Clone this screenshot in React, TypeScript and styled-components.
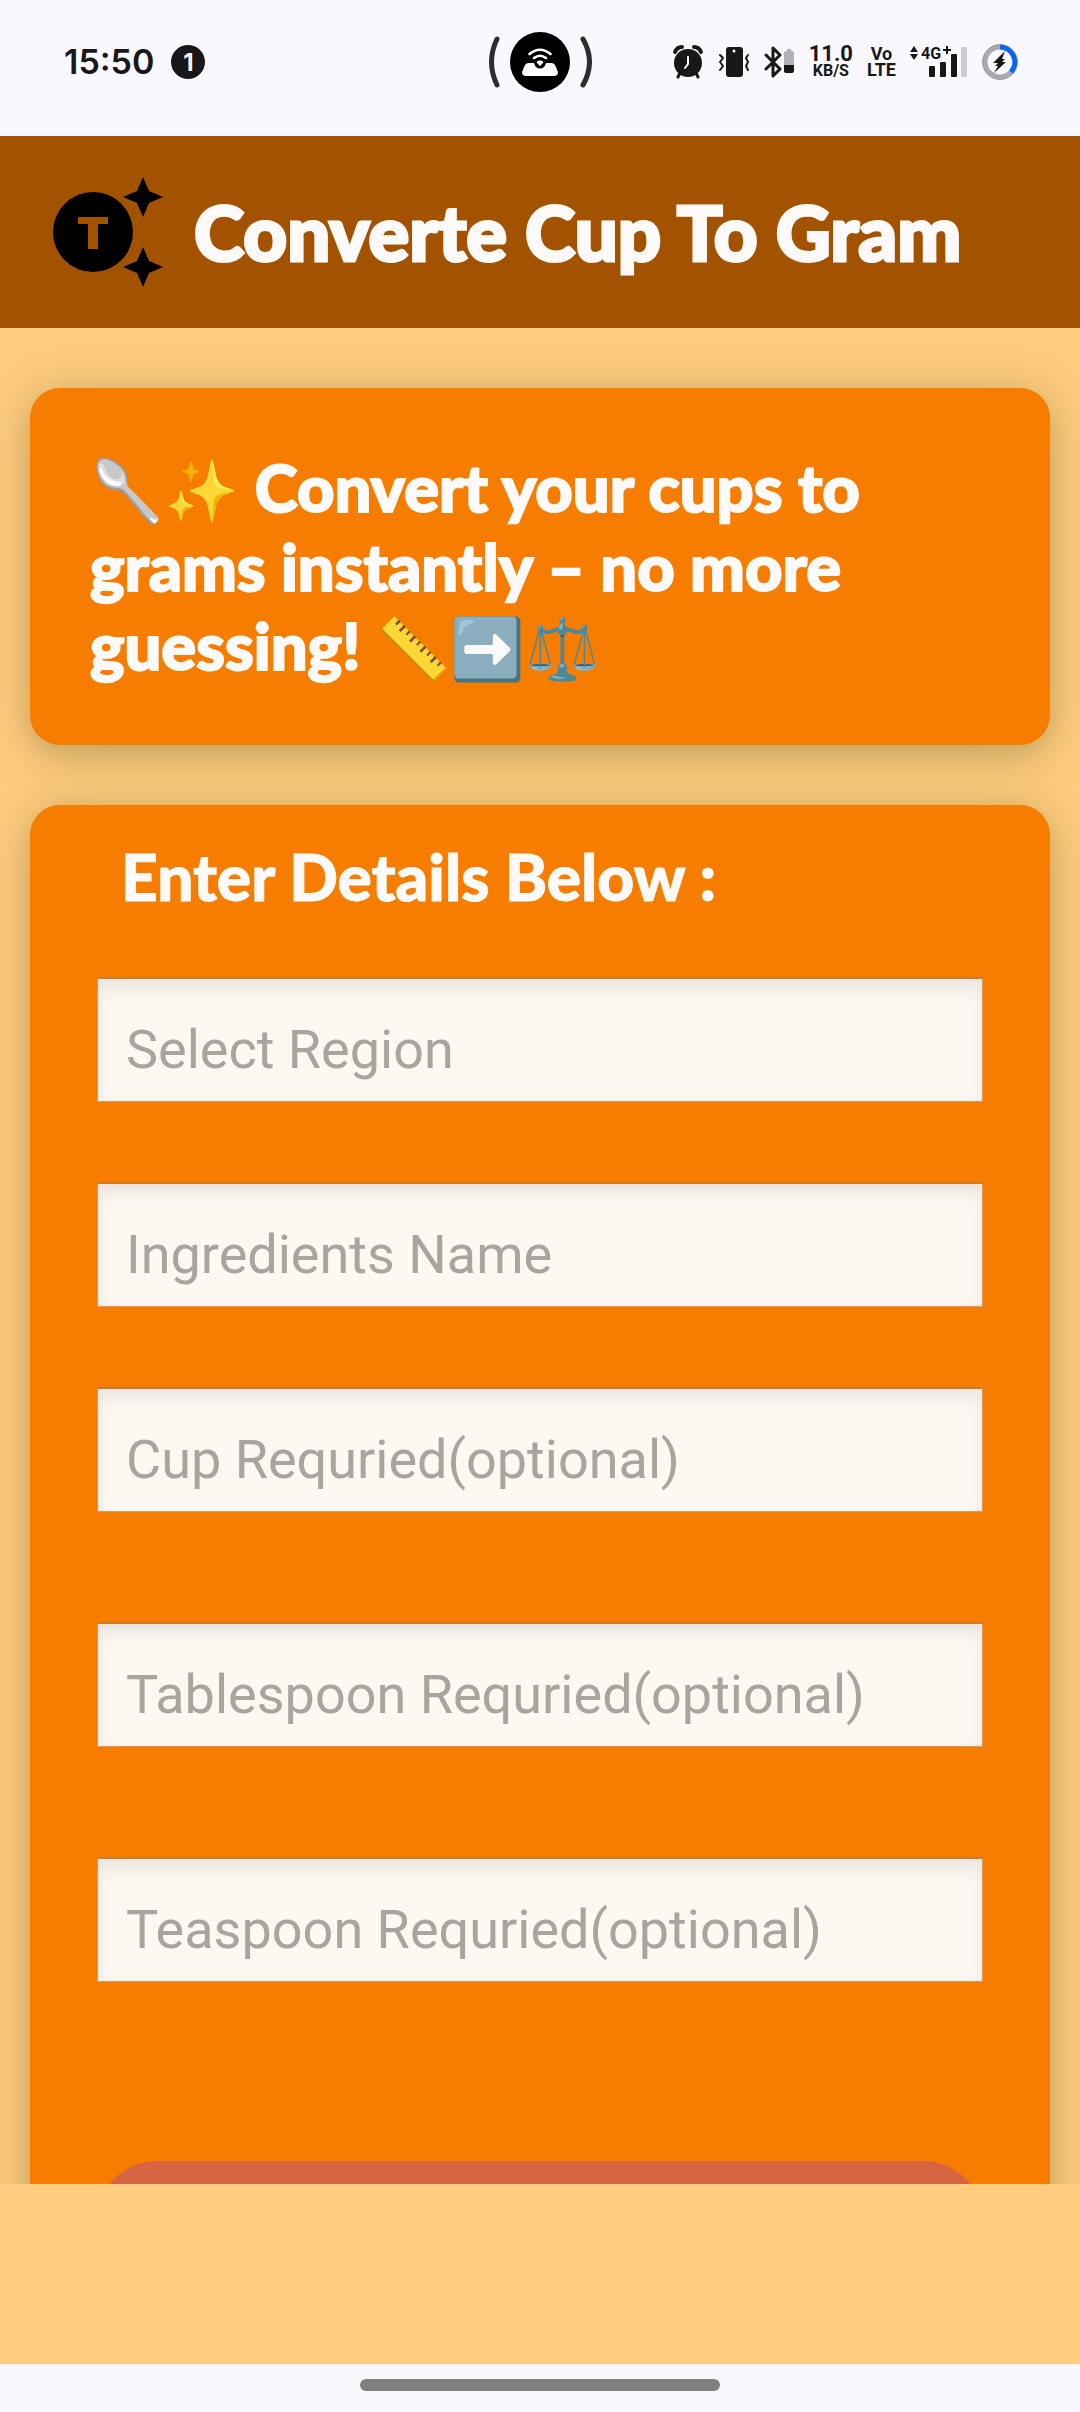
import React, { useState } from 'react';
import styled, { createGlobalStyle } from 'styled-components';

const display = "Lato, 'Noto Sans', 'Noto Color Emoji', sans-serif";
const system = 'Inter, Roboto, sans-serif';

const GlobalStyle = createGlobalStyle`
  *, *::before, *::after { box-sizing: border-box; }
  body { margin: 0; background: #ffcc80; }
`;

const Shell = styled.div`
  display: flex;
  flex-direction: column;
  height: 100vh;
  background: #ffcc80;
  font-family: ${display};
`;

const StatusBar = styled.div`
  display: grid;
  grid-template-columns: 1fr auto 1fr;
  align-items: center;
  flex: none;
  padding: 30px 62px 42px;
  background: #f9f8ff;
  color: #181818;
  font-family: ${system};
`;

const StatusSide = styled.div<{ $end?: boolean }>`
  display: flex;
  align-items: center;
  justify-content: ${(p) => (p.$end ? 'flex-end' : 'flex-start')};
  gap: ${(p) => (p.$end ? 14 : 17)}px;
`;

const Clock = styled.time`
  padding-left: 2px;
  font-size: 34px;
  line-height: 40px;
  font-weight: 600;
`;

const Badge = styled.span`
  display: grid;
  place-items: center;
  width: 34px;
  height: 34px;
  border-radius: 50%;
  background: #181818;
  color: #f9f8ff;
  font-size: 24px;
  font-weight: 700;
`;

const Stack = styled.span`
  display: flex;
  flex-direction: column;
  align-items: center;
  font-family: Roboto, sans-serif;
  font-weight: 700;
`;

const StackLine = styled.span<{ $size: number; $line: number }>`
  font-size: ${(p) => p.$size}px;
  line-height: ${(p) => p.$line}px;
`;

const AppBar = styled.header`
  display: flex;
  align-items: center;
  flex: none;
  gap: 30px;
  padding: 36px 50px;
  background: #a35200;
`;

const Title = styled.h1`
  margin: 0;
  color: #fcfaf8;
  font-size: 76px;
  line-height: 120px;
  font-weight: 900;
  white-space: nowrap;
  -webkit-text-stroke: 3px #fcfaf8;
`;

const Scroll = styled.main`
  display: flex;
  flex-direction: column;
  flex: 1;
  gap: 60px;
  min-height: 0;
  padding: 60px 30px 0;
  overflow: hidden;
`;

const Card = styled.section`
  flex: none;
  border-radius: 30px;
  background: #f77d00;
  box-shadow:
    0 10px 24px rgba(80, 80, 30, 0.15),
    0 6px 54px rgba(100, 100, 30, 0.3);
`;

const Intro = styled(Card)`
  padding: 60px;
`;

const IntroText = styled.p`
  margin: 0;
  color: #fcfaf8;
  font-size: 65px;
  line-height: 79px;
  font-weight: 900;
  -webkit-text-stroke: 2px #fcfaf8;
`;

const Emoji = styled.span`
  font-size: 60px;
  line-height: 60px;
  -webkit-text-stroke: 0;
`;

const Form = styled(Card).attrs({ as: 'form' })`
  padding: 32px 67px 80px;
`;

const FormTitle = styled.h2`
  margin: 0 0 60px;
  padding-left: 24px;
  color: #fcfaf8;
  font-size: 64px;
  line-height: 80px;
  font-weight: 900;
  -webkit-text-stroke: 1px #fcfaf8;
`;

const Fields = styled.div<{ $gap: number }>`
  display: flex;
  flex-direction: column;
  gap: ${(p) => p.$gap}px;
`;

const Field = styled.input`
  display: block;
  width: 100%;
  height: 125px;
  padding: 18px 28px 0;
  border: 1px solid #dc9a58;
  border-top: 2px solid #cd7a2a;
  border-radius: 0;
  outline: none;
  background: #fdf8f2;
  box-shadow: inset 0 8px 16px rgba(60, 50, 60, 0.1);
  color: #333333;
  font-family: Roboto, sans-serif;
  font-size: 54px;

  &::placeholder { color: #a8a49f; opacity: 1; }
`;

const Submit = styled.button`
  display: block;
  width: 100%;
  height: 150px;
  margin-top: 179px;
  border: 0;
  border-radius: 60px;
  background: #d86541;
  color: #fcfaf8;
  font-family: ${display};
  font-size: 64px;
  font-weight: 900;
`;

const AdSlot = styled.aside`
  flex: none;
  height: 180px;
`;

const NavBar = styled.footer`
  display: flex;
  justify-content: center;
  flex: none;
  padding: 15px 0 21px;
  background: #f9f8ff;
`;

const NavHandle = styled.span`
  width: 33.333%;
  height: 12px;
  border-radius: 6px;
  background: #7f7f7f;
`;

const star = (cx: number, cy: number) =>
  `M${cx} ${cy - 20}L${cx + 6} ${cy - 6}L${cx + 20} ${cy}L${cx + 6} ${cy + 6}L${cx} ${cy + 20}L${cx - 6} ${cy + 6}L${cx - 20} ${cy}L${cx - 6} ${cy - 6}Z`;

const Logo = () => (
  <svg width="114" height="114" viewBox="50 175 114 114" aria-hidden="true">
    <circle cx="93" cy="232" r="40" />
    <path fill="#a35200" d="M78 217h30v7H98v25H88v-25H78z" />
    <path d={star(143, 197)} />
    <path d={star(143, 267)} />
  </svg>
);

const CameraPill = () => (
  <svg width="104" height="64" viewBox="488 30 104 64" aria-hidden="true">
    <g fill="none" stroke="#2d2d2d" strokeWidth="5" strokeLinecap="round">
      <path d="M497 39Q486 62 497 85M583 39Q596 62 583 85" />
    </g>
    <circle cx="540" cy="62" r="30" />
    <path fill="#fff" d="M525 65q1-2 4-2h22q3 0 4 2l3 7q0 4-4 4h-28q-4 0-4-4z" />
    <path d="M534 62a6 6 0 0 0 12 0z" fill="#000" />
    <circle cx="540" cy="63" r="5.500" fill="#000" />
    <path d="M540 60.500q4 0 3 2.500l-3 3-3-3q-1-2.500 3-2.500z" fill="#fff" />
    <path d="M529.500 54q10.500-8.500 21 0M534 58q6-4.500 12 0" fill="none" stroke="#fff" strokeWidth="2.600" strokeLinecap="round" />
  </svg>
);

const Alarm = () => (
  <svg width="32" height="34" viewBox="0 0 32 34" aria-hidden="true">
    <circle cx="16" cy="18" r="14" fill="#181818" />
    <path d="M3 7q2-5 7-5M29 7q-2-5-7-5" stroke="#181818" strokeWidth="4" strokeLinecap="round" fill="none" />
    <path d="M8 28l-2 4M24 28l2 4" stroke="#181818" strokeWidth="3" strokeLinecap="round" />
    <path d="M16 12v7l-3 4" stroke="#fff" strokeWidth="2" fill="none" strokeLinecap="round" />
  </svg>
);

const Vibrate = () => (
  <svg width="32" height="32" viewBox="0 0 32 32" aria-hidden="true">
    <rect x="8" y="1" width="17" height="30" rx="3" fill="#181818" />
    <circle cx="16" cy="5" r="1.500" fill="#fff" />
    <path d="M2 9l3 3-3 4 3 4-3 4M30 9l-2 3 2 4-2 4 2 4" stroke="#181818" strokeWidth="2" fill="none" strokeLinecap="round" strokeLinejoin="round" />
  </svg>
);

const Bluetooth = () => (
  <svg width="31" height="32" viewBox="0 0 31 32" aria-hidden="true">
    <path d="M2 9l14 14-7 7V2l7 7L2 23" stroke="#181818" strokeWidth="3" fill="none" strokeLinejoin="round" strokeLinecap="round" />
    <path d="M20 7q0-2 2-2h1V3h4v2h1q2 0 2 2v14H20z" fill="#b3b2b8" />
    <path d="M20 19h10v6q0 2-2 2h-6q-2 0-2-2z" fill="#181818" />
  </svg>
);

const SignalText = styled.text`
  font: 700 16px Roboto, sans-serif;
`;

const Signal = () => (
  <svg width="58" height="44" viewBox="910 40 58 44" fill="#181818" aria-label="4G+ signal">
    <path d="M910 52l4-6 4 6zM910 54h8l-4 6z" />
    <SignalText x="921" y="59">4G</SignalText>
    <path d="M943 49h3v-3h2v3h3v2h-3v3h-2v-3h-3z" />
    <rect x="929" y="66" width="6" height="11" rx="1" />
    <rect x="940" y="62" width="6" height="15" rx="1" />
    <rect x="951" y="54" width="6" height="23" rx="1" />
    <rect x="961" y="47" width="6" height="30" rx="1" fill="#cdcbd2" />
  </svg>
);

const Battery = () => (
  <svg width="36" height="36" viewBox="1 1 36 36" aria-hidden="true">
    <circle cx="19" cy="19" r="15" fill="none" stroke="#aaa9ae" strokeWidth="5" />
    <path d="M19 4A15 15 0 0 1 30 29" fill="none" stroke="#0966f5" strokeWidth="5" />
    <circle cx="19" cy="19" r="17.500" fill="none" stroke="#77777f" strokeWidth="1" opacity=".6" />
    <path d="M24 8L12 20h5l-3 3h3l-4 7 12-11h-4l3-3h-3z" fill="#181818" />
  </svg>
);

const nearFields = ['Select Region', 'Ingredients Name', 'Cup Requried(optional)'];
const spoonFields = ['Tablespoon Requried(optional)', 'Teaspoon Requried(optional)'];

const SpoonFields = styled(Fields)`
  margin-top: 110px;
`;

export default function App() {
  const [values, setValues] = useState<Record<string, string>>({});
  const field = (name: string) => (
    <Field
      key={name}
      type="text"
      aria-label={name}
      placeholder={name}
      value={values[name] ?? ''}
      onChange={(e: React.ChangeEvent<HTMLInputElement>) => setValues({ ...values, [name]: e.target.value })}
    />
  );

  return (
    <Shell>
      <GlobalStyle />
      <StatusBar>
        <StatusSide>
          <Clock>15:50</Clock>
          <Badge>1</Badge>
        </StatusSide>
        <CameraPill />
        <StatusSide $end>
          <Alarm />
          <Vibrate />
          <Bluetooth />
          <Stack>
            <StackLine $size={22} $line={18}>11.0</StackLine>
            <StackLine $size={16} $line={16}>KB/S</StackLine>
          </Stack>
          <Stack>
            <StackLine $size={18} $line={16}>Vo</StackLine>
            <StackLine $size={18} $line={16}>LTE</StackLine>
          </Stack>
          <Signal />
          <Battery />
        </StatusSide>
      </StatusBar>
      <AppBar>
        <Logo />
        <Title>Converte Cup To Gram</Title>
      </AppBar>
      <Scroll>
        <Intro>
          <IntroText>
            <Emoji>🥄✨</Emoji> Convert your cups to grams instantly – no more guessing! <Emoji>📏➡️⚖️</Emoji>
          </IntroText>
        </Intro>
        <Form onSubmit={(e: React.FormEvent) => e.preventDefault()}>
          <FormTitle>Enter Details Below :</FormTitle>
          <Fields $gap={80}>{nearFields.map(field)}</Fields>
          <SpoonFields $gap={110}>{spoonFields.map(field)}</SpoonFields>
          <Submit type="submit" aria-label="Convert" />
        </Form>
      </Scroll>
      <AdSlot />
      <NavBar>
        <NavHandle />
      </NavBar>
    </Shell>
  );
}
